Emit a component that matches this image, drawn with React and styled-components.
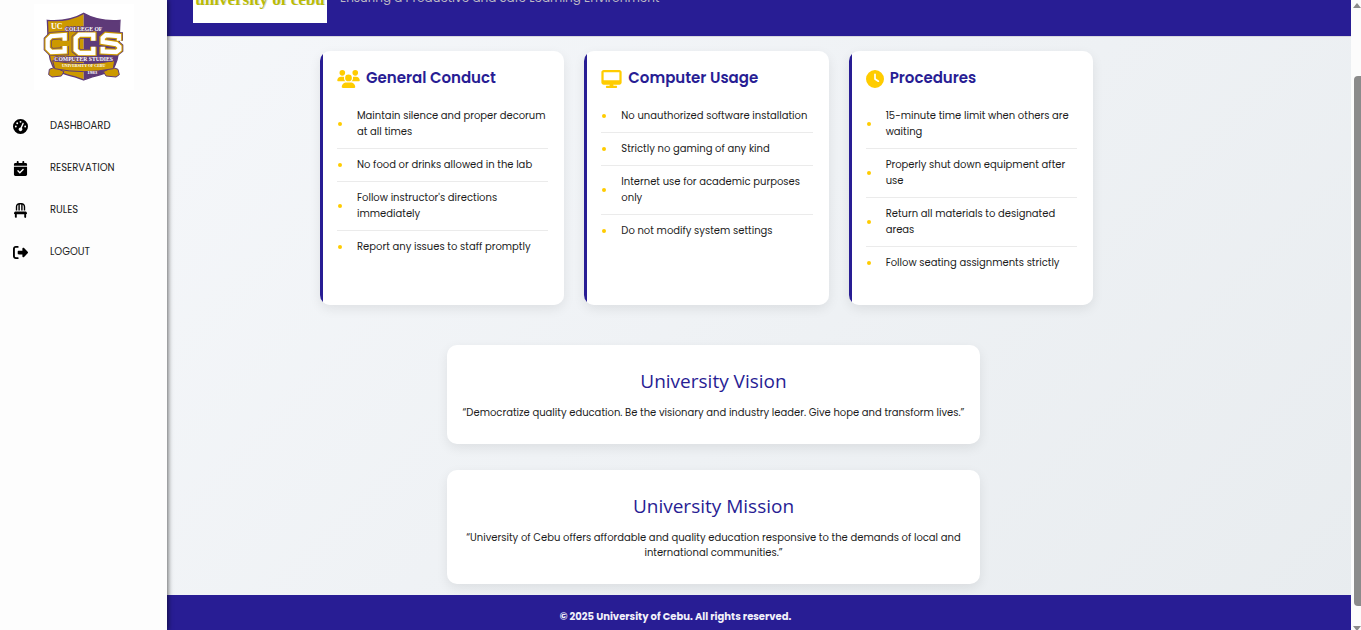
import React from "react";
import styled, { createGlobalStyle } from "styled-components";
import {
  FaGaugeHigh,
  FaCalendarCheck,
  FaChair,
  FaRightFromBracket,
  FaUsers,
  FaDesktop,
  FaClock,
} from "react-icons/fa6";

const navy = "#281d94";
const gold = "#ffcc00";

const GlobalStyle = createGlobalStyle`
  *, *::before, *::after { box-sizing: border-box; }
  body {
    margin: 0;
    overflow: hidden;
    color: #1c1c1c;
    font-family: Poppins, Inter, sans-serif;
    font-size: 10px;
  }
  h2, p, ul { margin: 0; padding: 0; font-weight: 400; }
`;

const Shell = styled.div`
  display: flex;
  height: 100vh;
  overflow: hidden;
`;

const Sidebar = styled.aside`
  flex: 0 0 167px;
  position: relative;
  z-index: 1;
  padding-top: 4px;
  background: #fdfdfd;
  box-shadow: 1px 0 5px rgba(0, 0, 0, 0.6);
`;

const LogoBox = styled.div`
  width: 100px;
  height: 86px;
  margin: 0 auto 15px;
  background: #fff;

  svg { display: block; }
`;

const Nav = styled.nav`
  display: flex;
  flex-direction: column;
`;

const NavLink = styled.a`
  display: grid;
  grid-template-columns: 37px 1fr;
  align-items: center;
  height: 42px;
  padding: 0 13px;
  color: #222;
  font-size: 10px;
  text-decoration: none;
  text-transform: uppercase;

  svg { font-size: 15px; color: #000; }
`;

const Main = styled.main`
  flex: 1;
  min-width: 0;
  display: flex;
  flex-direction: column;
  background: linear-gradient(135deg, #f5f7fa 0%, #e8ecef 100%);
`;

const Header = styled.header`
  flex: 0 0 36px;
  display: flex;
  align-items: flex-end;
  gap: 13px;
  overflow: hidden;
  padding: 0 26px 13px;
  background: ${navy};
`;

const HeaderEdge = styled.div`
  flex: none;
  height: 1px;
  background: #d6d7de;
`;

const BrandMark = styled.div`
  flex: none;
  width: 134px;
  padding: 20px 0 13px;
  background: #fff;
  color: #b9bb08;
  font: 700 17px/20px "Liberation Serif", serif;
  text-align: center;
  text-shadow: 1px 0 0 #8f9f9a66;
  white-space: nowrap;
`;

const Tagline = styled.p`
  padding-bottom: 15px;
  color: #bcb9c4;
  font-size: 12px;
  line-height: 20px;
`;

const Content = styled.div`
  flex: 1;
  padding: 14px 0 11px;
`;

const CardArea = styled.div`
  padding: 0 105px 40px 0;
`;

const CardGrid = styled.div`
  display: grid;
  grid-template-columns: repeat(3, 1fr);
  gap: 20px;
  max-width: 773px;
  margin: 0 auto;
`;

const Card = styled.section`
  padding: 16px 16px 26px 17px;
  border-radius: 10px;
  background: linear-gradient(to right, ${navy} 3px, #fff 3px);
  box-shadow: 0 4px 12px rgba(0, 0, 0, 0.08);
`;

const CardTitle = styled.h2`
  display: flex;
  align-items: center;
  gap: 6px;
  height: 24px;
  margin-bottom: 9px;
  color: ${navy};
  font-size: 15px;
  font-weight: 600;
  line-height: 22px;

  svg {
    flex: none;
    width: ${(p) => p.$iconWidth}px;
    height: 18px;
    color: ${gold};
  }
  span { padding-bottom: 2px; }
`;

const RuleList = styled.ul`
  list-style: none;
`;

const Rule = styled.li`
  display: flex;
  align-items: center;
  gap: 15px;
  padding: 8px 0 8px 1px;
  line-height: 16px;

  &::before {
    content: "";
    flex: none;
    width: 4px;
    height: 4px;
    border-radius: 50%;
    background: ${gold};
  }
  &:not(:last-child) { border-bottom: 1px solid #ebebeb; }
`;

const StatementArea = styled.div`
  display: flex;
  flex-direction: column;
  align-items: center;
  gap: 26px;
  padding-right: 91px;
`;

const Statement = styled.section`
  width: 100%;
  max-width: 533px;
  padding: 24px 14px;
  border-radius: 10px;
  background: #fff;
  box-shadow: 0 4px 12px rgba(0, 0, 0, 0.08);
  text-align: center;
  line-height: 15px;
`;

const StatementTitle = styled.h2`
  margin-bottom: 12px;
  color: ${navy};
  font-family: "Segoe UI", "Open Sans", sans-serif;
  font-size: 19px;
  line-height: 24px;
`;

const Footer = styled.footer`
  flex: 0 0 35px;
  padding: 12px 167px 0 0;
  background: ${navy};
  color: #f1f0fa;
  font-weight: 700;
  line-height: 20px;
  text-align: center;
`;

const ScrollTrack = styled.div`
  flex: 0 0 10px;
  display: flex;
  flex-direction: column;
  align-items: flex-end;
  background: #fcfcfc;

  svg { flex: none; display: block; }
`;

const ScrollThumb = styled.div`
  flex: 1;
  width: 7px;
  margin: 66px 0 19px;
  border-radius: 4px 0 0 4px;
  background: #8b8b8b;
`;

const links = [
  ["Dashboard", FaGaugeHigh],
  ["Reservation", FaCalendarCheck],
  ["Rules", FaChair],
  ["Logout", FaRightFromBracket],
];

const cards = [
  {
    title: "General Conduct",
    Icon: FaUsers,
    iconWidth: 23,
    rules: [
      "Maintain silence and proper decorum at all times",
      "No food or drinks allowed in the lab",
      "Follow instructor's directions immediately",
      "Report any issues to staff promptly",
    ],
  },
  {
    title: "Computer Usage",
    Icon: FaDesktop,
    iconWidth: 21,
    rules: [
      "No unauthorized software installation",
      "Strictly no gaming of any kind",
      "Internet use for academic purposes only",
      "Do not modify system settings",
    ],
  },
  {
    title: "Procedures",
    Icon: FaClock,
    iconWidth: 18,
    rules: [
      "15-minute time limit when others are waiting",
      "Properly shut down equipment after use",
      "Return all materials to designated areas",
      "Follow seating assignments strictly",
    ],
  },
];

const statements = [
  [
    "University Vision",
    "“Democratize quality education. Be the visionary and industry leader. Give hope and transform lives.”",
  ],
  [
    "University Mission",
    "“University of Cebu offers affordable and quality education responsive to the demands of local and international communities.”",
  ],
];

function CollegeLogo() {
  const purple = "#5e3a78";
  const ochre = "#cc9900";
  return (
    <svg width="100" height="86" viewBox="0 0 300 258" role="img" aria-label="College of Computer Studies">
      <path d="M149 28C120 45 80 52 40 49C44 105 38 150 56 186C72 214 116 212 149 228Z" fill={ochre} />
      <path d="M149 28C178 45 218 52 258 49C254 105 260 150 242 186C226 214 182 212 149 228Z" fill={purple} />
      <path
        d="M149 28C120 45 80 52 40 49C44 105 38 150 56 186C72 214 116 212 149 228C182 212 226 214 242 186C260 150 254 105 258 49C218 52 178 45 149 28Z"
        fill="none"
        stroke={purple}
        strokeWidth="4"
      />
      <path d="M62 190L46 196L44 212L54 219L82 216L90 203Z" fill={ochre} stroke={purple} strokeWidth="3" />
      <path d="M236 190L252 196L256 212L246 219L216 216L208 203Z" fill={ochre} stroke={purple} strokeWidth="3" />
      <g fill="none" strokeLinejoin="miter">
        {[
          [purple, 24],
          [ochre, 20],
          ["#ffffff", 13],
        ].map(([stroke, width]) => (
          <g key={stroke} stroke={stroke} strokeWidth={width}>
            <path d="M92 110V93L52 96L41 107V133L52 144L92 142V126" />
            <path d="M178 110V92H136L125 102V138L136 147H178V128" />
            <path d="M255 110V96L216 93L206 102V114L247 120L256 128V137L247 144L206 142V128" />
          </g>
        ))}
      </g>
      <path d="M56 170Q149 188 242 170L238 194Q149 212 62 194Z" fill={ochre} stroke={purple} strokeWidth="3" />
      <g fontFamily="Liberation Serif, serif" fontWeight="700" fill="#fff" textAnchor="middle">
        <text x="68" y="75" fontSize="24">UC</text>
        <text x="149" y="80" fontSize="17" stroke={purple} strokeWidth="4" paintOrder="stroke">COLLEGE OF</text>
        <text x="149" y="171" fontSize="17" stroke={purple} strokeWidth="4" paintOrder="stroke">COMPUTER STUDIES</text>
        <text x="149" y="190" fontSize="12">UNIVERSITY OF CEBU</text>
        <text x="175" y="210" fontSize="15">1983</text>
      </g>
    </svg>
  );
}

export default function App() {
  return (
    <Shell>
      <GlobalStyle />
      <Sidebar>
        <LogoBox>
          <CollegeLogo />
        </LogoBox>
        <Nav>
          {links.map(([label, Icon]) => (
            <NavLink href="#" key={label}>
              <Icon />
              <span>{label}</span>
            </NavLink>
          ))}
        </Nav>
      </Sidebar>
      <Main>
        <Header>
          <BrandMark>university of cebu</BrandMark>
          <Tagline>Ensuring a Productive and Safe Learning Environment</Tagline>
        </Header>
        <HeaderEdge />
        <Content>
          <CardArea>
            <CardGrid>
              {cards.map(({ title, Icon, iconWidth, rules }) => (
                <Card key={title}>
                  <CardTitle $iconWidth={iconWidth}>
                    <Icon />
                    <span>{title}</span>
                  </CardTitle>
                  <RuleList>
                    {rules.map((rule) => (
                      <Rule key={rule}>
                        <span>{rule}</span>
                      </Rule>
                    ))}
                  </RuleList>
                </Card>
              ))}
            </CardGrid>
          </CardArea>
          <StatementArea>
            {statements.map(([title, text]) => (
              <Statement key={title}>
                <StatementTitle>{title}</StatementTitle>
                <p>{text}</p>
              </Statement>
            ))}
          </StatementArea>
        </Content>
        <Footer>© 2025 University of Cebu. All rights reserved.</Footer>
      </Main>
      <ScrollTrack aria-hidden="true">
        <svg width="8" height="10" viewBox="0 0 8 10">
          <path d="M4 3L8 8H0Z" fill="#8b8b8b" />
        </svg>
        <ScrollThumb />
        <svg width="8" height="5" viewBox="0 0 8 5">
          <path d="M0 1H8L4 6Z" fill="#8b8b8b" />
        </svg>
      </ScrollTrack>
    </Shell>
  );
}
